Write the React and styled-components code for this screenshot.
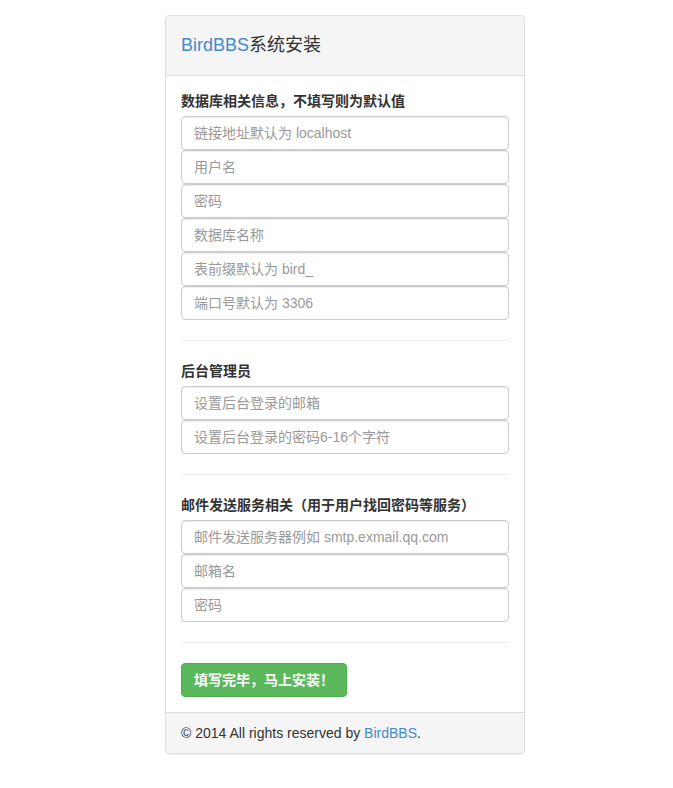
import styled, { createGlobalStyle } from "styled-components";

const GlobalStyle = createGlobalStyle`
  * { box-sizing: border-box; }
  body {
    margin: 0;
    background: #fff;
    color: #333;
    font-family: "Liberation Sans", "Noto Sans CJK SC", sans-serif;
    font-size: 14px;
    line-height: 1.42857;
  }
`;

const Page = styled.div`
  padding: 15px 0 30px 165px;
`;

const Panel = styled.div`
  width: 360px;
  background: #fff;
  border: 1px solid #ddd;
  border-radius: 4px;
  box-shadow: 0 1px 1px rgba(0, 0, 0, 0.05);
  overflow: hidden;
`;

const Heading = styled.div`
  background: #f5f5f5;
  border-bottom: 1px solid #ddd;
  padding: 20px 15px 20px 15px;
  height: 60px;
`;

const Title = styled.h3`
  margin: 0;
  font-size: 18px;
  line-height: 19px;
  font-weight: 400;
  color: #333;
`;

const Brand = styled.a`
  color: #428bca;
  text-decoration: none;
`;

const Body = styled.div`
  padding: 15px;
`;

const Group = styled.div`
  display: flex;
  flex-direction: column;
`;

const Label = styled.label`
  display: block;
  margin-bottom: 5px;
  font-weight: 700;
  font-size: 14px;
  line-height: 20px;
  color: #333;
`;

const Input = styled.input`
  display: block;
  width: 100%;
  height: 34px;
  padding: 6px 12px;
  font-family: inherit;
  font-size: 14px;
  color: #555;
  background: #fff;
  border: 1px solid #ccc;
  border-radius: 4px;
  box-shadow: inset 0 1px 1px rgba(0, 0, 0, 0.075);
  outline: none;

  &::placeholder {
    color: #999;
  }
`;

const Divider = styled.hr`
  margin: 20px 0;
  border: 0;
  border-top: 1px solid #eee;
`;

const Button = styled.button`
  display: inline-block;
  height: 34px;
  padding: 6px 12px;
  font-family: inherit;
  font-size: 14px;
  font-weight: 700;
  line-height: 20px;
  color: #fff;
  background: #5cb85c;
  border: 1px solid #4cae4c;
  border-radius: 4px;
  cursor: pointer;
`;

const Footer = styled.div`
  background: #f5f5f5;
  border-top: 1px solid #ddd;
  padding: 10px 15px;
  line-height: 20px;
  color: #333;
`;

const sections = [
  {
    label: "数据库相关信息，不填写则为默认值",
    fields: [
      "链接地址默认为 localhost",
      "用户名",
      "密码",
      "数据库名称",
      "表前缀默认为 bird_",
      "端口号默认为 3306",
    ],
  },
  {
    label: "后台管理员",
    fields: ["设置后台登录的邮箱", "设置后台登录的密码6-16个字符"],
  },
  {
    label: "邮件发送服务相关（用于用户找回密码等服务）",
    fields: ["邮件发送服务器例如 smtp.exmail.qq.com", "邮箱名", "密码"],
  },
];

const App = () => {
  return (
    <Page>
      <GlobalStyle />
      <Panel>
        <Heading>
          <Title>
            <Brand href="#">BirdBBS</Brand>系统安装
          </Title>
        </Heading>

        <Body>
          {sections.map((section, i) => (
            <div key={i}>
              <Group>
                <Label>{section.label}</Label>
                {section.fields.map((field, j) => (
                  <Input key={j} type="text" placeholder={field} />
                ))}
              </Group>
              <Divider />
            </div>
          ))}

          <Button type="button">填写完毕，马上安装！</Button>
        </Body>

        <Footer>
          © 2014 All rights reserved by <Brand href="#">BirdBBS</Brand>.
        </Footer>
      </Panel>
    </Page>
  );
};

export default App;
